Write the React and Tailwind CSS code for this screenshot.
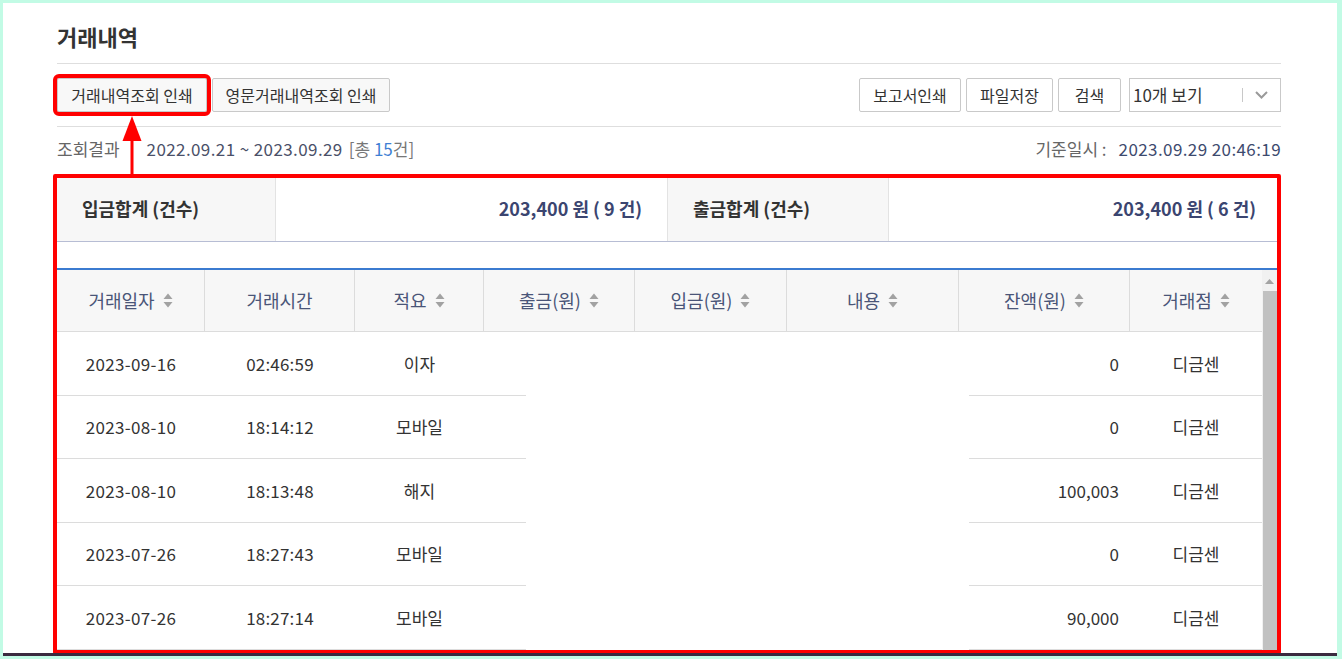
import React from 'react';

const font = { fontFamily: '"Noto Sans CJK KR", "Noto Sans", sans-serif' };

const columns = [
    { label: '거래일자', w: 'w-[148px]', sort: true },
    { label: '거래시간', w: 'w-[150px]', sort: false },
    { label: '적요', w: 'w-[129px]', sort: true },
    { label: '출금(원)', w: 'w-[151px]', sort: true },
    { label: '입금(원)', w: 'w-[152px]', sort: true },
    { label: '내용', w: 'w-[172px]', sort: true },
    { label: '잔액(원)', w: 'w-[171px]', sort: true },
    { label: '거래점', w: 'w-[132px]', sort: true },
];

const rows = [
    { date: '2023-09-16', time: '02:46:59', memo: '이자', balance: '0', branch: '디금센' },
    { date: '2023-08-10', time: '18:14:12', memo: '모바일', balance: '0', branch: '디금센' },
    { date: '2023-08-10', time: '18:13:48', memo: '해지', balance: '100,003', branch: '디금센' },
    { date: '2023-07-26', time: '18:27:43', memo: '모바일', balance: '0', branch: '디금센' },
    { date: '2023-07-26', time: '18:27:14', memo: '모바일', balance: '90,000', branch: '디금센' },
];

const SortIcon = () => (
    <svg width="10" height="15" viewBox="0 0 10 15" className="shrink-0">
        <path d="M5 0.5 L9.5 6 H0.5 Z" fill="#a2a2a2" />
        <path d="M5 14.5 L9.5 9 H0.5 Z" fill="#a2a2a2" />
    </svg>
);

const Button = ({ children, className = '' }) => (
    <button className={`h-[34px] px-[10px] border border-[#c9c9c9] rounded-[2px] text-[16px] text-[#333] whitespace-nowrap ${className}`}>
        {children}
    </button>
);

export default function App() {
    return (
        <div className="w-[1342px] h-[659px] bg-[#c2fbe5] pt-[3px] pl-[3px] pr-[5px] overflow-hidden" style={font}>
            <div className="relative h-[653px] bg-white border-b-[3px] border-[#3b2a3f] pl-[54px] pr-[56px] overflow-hidden">
                {/* title */}
                <div className="pt-[19px] pb-[13px] border-b border-[#dedede]">
                    <h1 className="text-[22px] leading-[28px] font-bold text-[#333]">거래내역</h1>
                </div>

                {/* toolbar */}
                <div className="flex items-center justify-between pt-[14px] pb-[14px] border-b border-[#dedede]">
                    <div className="flex gap-[5px]">
                        <Button className="bg-[#f8f8f8] w-[150px] outline-4 outline-[#ff0000]">거래내역조회 인쇄</Button>
                        <Button className="bg-[#f8f8f8] w-[178px]">영문거래내역조회 인쇄</Button>
                    </div>
                    <div className="flex items-center">
                        <Button className="bg-white w-[102px]">보고서인쇄</Button>
                        <Button className="bg-white w-[87px] ml-[5px]">파일저장</Button>
                        <Button className="bg-white w-[63px] ml-[5px]">검색</Button>
                        <div className="ml-[8px] w-[152px] h-[34px] border border-[#c9c9c9] flex items-center text-[17px] text-[#333]">
                            <span className="pl-[3px] flex-1">10개 보기</span>
                            <span className="w-px h-[14px] bg-[#c8c8c8]" />
                            <svg width="13" height="8" viewBox="0 0 13 8" className="mx-[12px]">
                                <path d="M1 1 L6.5 6.5 L12 1" fill="none" stroke="#9a9a9a" strokeWidth="2" />
                            </svg>
                        </div>
                    </div>
                </div>

                {/* result info */}
                <div className="flex items-center justify-between pt-[11px] mb-[14px] h-[22px] box-content text-[17px]">
                    <div className="flex items-center">
                        <span className="text-[#666]">조회결과</span>
                        <span className="ml-[27px] text-[#4a5068] tracking-[0.4px]">2022.09.21 ~ 2023.09.29</span>
                        <span className="ml-[6px] text-[#777]">[총 <span className="text-[#3f7fd4]">15</span>건]</span>
                    </div>
                    <div className="flex items-center">
                        <span className="text-[#666]">기준일시 :</span>
                        <span className="ml-[12px] text-[#3d4a6e] tracking-[0.4px]">2023.09.29 20:46:19</span>
                    </div>
                </div>

                {/* annotated area */}
                <div className="-ml-[4px] border-4 border-[#ff0000] rounded-[2px]">
                    {/* summary */}
                    <div className="flex h-[64px] border-b border-[#b7bdd4] text-[18px] font-bold">
                        <div className="w-[219px] bg-[#f7f7f7] border-r border-[#e3e3e3] flex items-center pl-[25px] pb-[3px] text-[#333]">입금합계 (건수)</div>
                        <div className="w-[392px] border-r border-[#e3e3e3] flex items-center justify-end pr-[25px] pb-[3px] text-[#3b4570]">203,400 원 ( 9 건)</div>
                        <div className="w-[221px] bg-[#f7f7f7] border-r border-[#e3e3e3] flex items-center pl-[25px] pb-[3px] text-[#333]">출금합계 (건수)</div>
                        <div className="flex-1 flex items-center justify-end pr-[21px] pb-[3px] text-[#3b4570]">203,400 원 ( 6 건)</div>
                    </div>

                    {/* list */}
                    <div className="mt-[26px] border-t-2 border-[#3b7bd0] flex">
                        <div className="w-[1205px]">
                            <div className="flex h-[62px] bg-[#f7f7f7] border-b border-[#dcdcdc]">
                                {columns.map((col, i) => (
                                    <div
                                        key={col.label}
                                        className={`${col.w} flex items-center justify-center gap-[8px] text-[18px] text-[#4a5578] ${i < columns.length - 1 ? 'border-r border-[#dcdcdc]' : ''}`}
                                    >
                                        <span>{col.label}</span>
                                        {col.sort && <SortIcon />}
                                    </div>
                                ))}
                            </div>
                            <div className="h-[318px] flex flex-col text-[17px] text-[#333]">
                                {rows.map((row, i) => (
                                    <div key={i} className="flex-1 flex">
                                        <div className="w-[469px] flex border-b border-[#dcdcdc]">
                                            <div className="w-[148px] flex items-center justify-center tracking-[0.3px]">{row.date}</div>
                                            <div className="w-[150px] flex items-center justify-center tracking-[0.2px]">{row.time}</div>
                                            <div className="w-[129px] flex items-center justify-center">{row.memo}</div>
                                        </div>
                                        <div className="w-[443px]" />
                                        <div className="w-[293px] flex border-b border-[#dcdcdc]">
                                            <div className="w-[161px] flex items-center justify-end pr-[11px]">{row.balance}</div>
                                            <div className="w-[132px] flex items-center justify-center">{row.branch}</div>
                                        </div>
                                    </div>
                                ))}
                            </div>
                        </div>
                        {/* scrollbar */}
                        <div className="w-[15px] bg-[#f1f1f1] flex flex-col items-center">
                            <svg width="9" height="5" viewBox="0 0 9 5" className="mt-[9px]">
                                <path d="M4.5 0 L9 5 H0 Z" fill="#a3a3a3" />
                            </svg>
                            <div className="mt-[7px] ml-[1px] w-[14px] flex-1 bg-[#c1c1c1]" />
                        </div>
                    </div>
                </div>

                {/* annotation arrow */}
                <svg width="24" height="62" viewBox="0 0 24 62" className="absolute left-[117px] top-[112px]">
                    <path d="M12 1 L21.5 26 H2.5 Z" fill="#ff0000" />
                    <rect x="10.5" y="20" width="3" height="42" fill="#ff0000" />
                </svg>
            </div>
        </div>
    );
}
